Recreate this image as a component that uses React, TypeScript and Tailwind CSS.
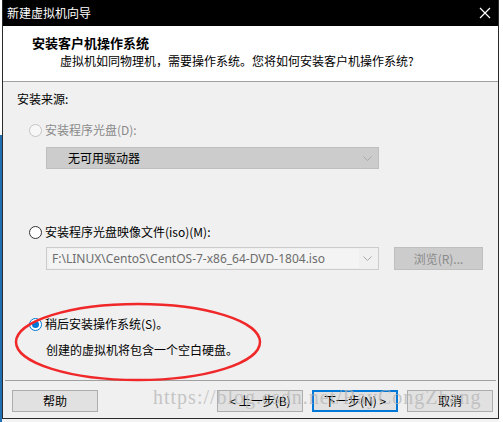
import React from 'react';

const font = { fontFamily: '"Noto Sans CJK SC", "Microsoft YaHei", sans-serif' };

const Radio: React.FC<{ state: 'disabled' | 'off' | 'on' }> = ({ state }) => {
  if (state === 'on')
    return (
      <span className="w-[13px] h-[13px] rounded-full border border-[#0078d7] bg-white flex items-center justify-center shrink-0">
        <span className="w-[7px] h-[7px] rounded-full bg-[#0078d7]" />
      </span>
    );
  return (
    <span
      className={`w-[13px] h-[13px] rounded-full border shrink-0 ${
        state === 'disabled' ? 'border-[#c4c4c4] bg-[#f7f7f7]' : 'border-[#333333] bg-white'
      }`}
    />
  );
};

const Chevron = () => (
  <svg width="9" height="5" viewBox="0 0 9 5" className="shrink-0">
    <path d="M0.5 0.5 L4.5 4.5 L8.5 0.5" fill="none" stroke="#a8a8a8" strokeWidth="1" />
  </svg>
);

const Btn: React.FC<{ label: string; primary?: boolean }> = ({ label, primary }) => (
  <div
    className={`w-[86px] h-[22px] flex items-center justify-center text-[12px] text-black bg-[#e1e1e1] ${
      primary ? 'border-2 border-[#0078d7]' : 'border border-[#adadad]'
    }`}
  >
    {label}
  </div>
);

export default function App() {
  return (
    <div className="w-[503px] h-[422px] relative flex bg-[#f3f3f3] overflow-hidden" style={font}>
      <div className="w-[2px] h-full flex flex-col">
        <div className="h-[135px] bg-white" />
        <div className="flex-1 bg-[#1f6fb2]" />
      </div>
      <div className="w-[497px] h-[419px] flex flex-col border-x border-b border-[#2b2b2b] bg-[#f0f0f0]">
        <div className="h-[26px] bg-black flex items-center justify-between pl-[4px] pr-[7px]">
          <span className="text-white text-[12px]">新建虚拟机向导</span>
          <svg width="12" height="12" viewBox="0 0 12 12">
            <path d="M1 1 L11 11 M11 1 L1 11" stroke="white" strokeWidth="1.2" />
          </svg>
        </div>
        <div className="h-[56px] bg-white border-b border-[#a0a0a0] flex flex-col pl-[29px] pt-[8px]">
          <span className="text-[13px] font-bold text-black leading-[18px]">安装客户机操作系统</span>
          <span className="text-[12px] text-black leading-[18px] pl-[28px]">
            虚拟机如同物理机，需要操作系统。您将如何安装客户机操作系统?
          </span>
        </div>
        <div className="flex-1 flex flex-col relative">
          <div className="pl-[14px] pt-[9px] text-[12px] leading-[16px] text-black">安装来源:</div>
          <div className="flex items-center gap-[3px] pl-[26px] mt-[15px] h-[16px]">
            <Radio state="disabled" />
            <span className="text-[12px] text-[#8a8a8a]">安装程序光盘(D):</span>
          </div>
          <div className="ml-[43px] mt-[9px] w-[333px] h-[22px] bg-[#cccccc] border border-[#bfbfbf] flex items-center justify-between pl-[21px] pr-[6px]">
            <span className="text-[12px] text-black">无可用驱动器</span>
            <Chevron />
          </div>
          <div className="flex items-center gap-[3px] pl-[26px] mt-[55px] h-[16px]">
            <Radio state="off" />
            <span className="text-[12px] text-black">安装程序光盘映像文件(iso)(M):</span>
          </div>
          <div className="flex items-center mt-[7px] ml-[43px] gap-[15px]">
            <div className="w-[333px] h-[23px] bg-[#f0f0f0] border border-[#cccccc] flex items-center justify-between pl-[2px] pr-[6px]">
              <div className="h-[19px] w-[310px] bg-[#f4f4f4] flex items-center pl-[3px]">
                <span className="text-[12px] text-[#6d6d6d]" style={{ fontFamily: '"Noto Sans", "Open Sans", sans-serif' }}>
                  F:\LINUX\CentoS\CentOS-7-x86_64-DVD-1804.iso
                </span>
              </div>
              <Chevron />
            </div>
            <div className="w-[89px] h-[23px] bg-[#cccccc] border border-[#bfbfbf] flex items-center justify-center text-[12px] text-[#8a8a8a]">
              浏览(R)...
            </div>
          </div>
          <div className="flex items-center gap-[3px] pl-[26px] mt-[46px] h-[16px]">
            <Radio state="on" />
            <span className="text-[12px] text-black">稍后安装操作系统(S)。</span>
          </div>
          <div className="pl-[43px] mt-[10px] text-[12px] leading-[16px] text-black">创建的虚拟机将包含一个空白硬盘。</div>
          <div className="mt-[22px] mx-[2px] h-px bg-[#a0a0a0]" />
          <div className="flex items-center mt-[9px] pl-[9px]">
            <Btn label="帮助" />
            <div className="w-[119px]" />
            <div className="flex gap-[9px]">
              <Btn label="< 上一步(B)" />
              <Btn label="下一步(N) >" primary />
              <Btn label="取消" />
            </div>
          </div>
          <svg className="absolute left-[9px] top-[219px] pointer-events-none" width="254" height="82" viewBox="0 0 254 82">
            <ellipse cx="126" cy="41" rx="122" ry="38" fill="none" stroke="#f0282a" strokeWidth="2.5" />
          </svg>
          <div
            className="absolute left-[150px] top-[303px] text-[20px] leading-[24px] text-[#b4b4b4] opacity-70 pointer-events-none tracking-[1px]"
            style={{ fontFamily: '"Liberation Serif", serif' }}
          >
            https://blog.csdn.net/RayCongZhang
          </div>
        </div>
      </div>
      <div className="flex-1 bg-white" />
    </div>
  );
}
